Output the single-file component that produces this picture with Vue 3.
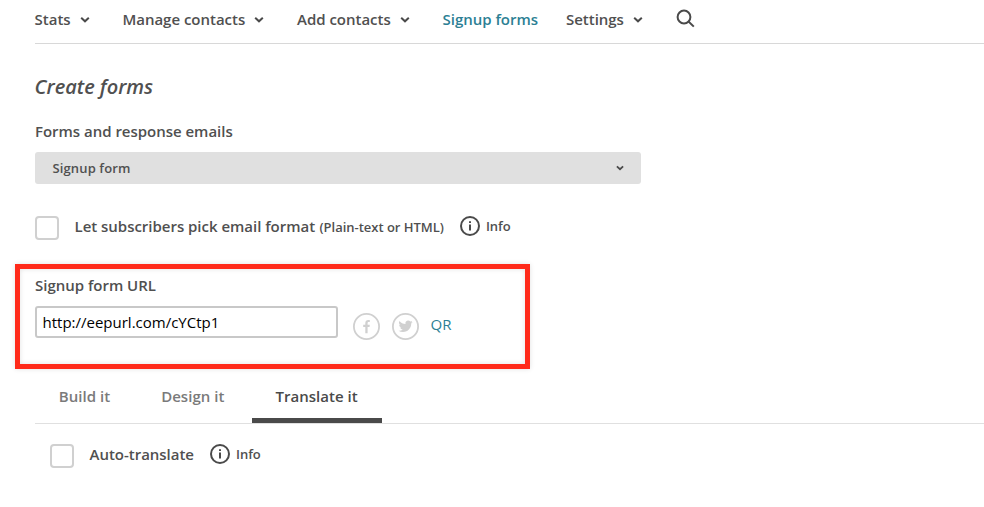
<template>
  <div class="page">
    <nav class="main-nav">
      <a
        v-for="item in navItems"
        :key="item.label"
        href="#"
        class="nav-item"
        :class="{ active: item.active }"
        @click.prevent
      >
        <span>{{ item.label }}</span>
        <svg v-if="item.menu" class="nav-chevron" viewBox="0 0 10 8">
          <path d="M1.2 1.8 L5 5.3 L8.8 1.8" />
        </svg>
      </a>
      <button class="search-btn" aria-label="Search">
        <svg viewBox="0 0 20 20">
          <circle cx="8" cy="8" r="6.4" />
          <path d="M12.5 12.5 L17.8 17.6" />
        </svg>
      </button>
    </nav>

    <h1 class="title">Create forms</h1>

    <div class="field-label">Forms and response emails</div>
    <div class="form-select">
      <span>Signup form</span>
      <svg class="select-chevron" viewBox="0 0 8 6">
        <path d="M0.9 1.4 L4 4.2 L7.1 1.4" />
      </svg>
    </div>

    <div class="check-row format-row">
      <input v-model="pickFormat" type="checkbox" class="checkbox" />
      <span class="check-label">Let subscribers pick email format</span>
      <span class="hint">(Plain-text or HTML)</span>
      <svg class="info-icon" viewBox="0 0 20 20">
        <circle cx="10" cy="10" r="9" />
        <path d="M10 8.6 V14.6 M10 5.2 V7" />
      </svg>
      <span class="info-text">Info</span>
    </div>

    <section class="url-box">
      <div class="url-label">Signup form URL</div>
      <div class="url-row">
        <input v-model="url" type="text" class="url-input" />
        <a href="#" class="social" aria-label="Facebook" @click.prevent>
          <svg viewBox="0 0 27 27">
            <circle cx="13.5" cy="13.5" r="12.6" />
            <path d="M12.3 20.2 V14.1 H10.2 V11.8 H12.3 V10.2 C12.3 7.9 13.5 7 15.2 7 H16.8 V9.1 H15.7 C14.9 9.1 14.6 9.5 14.6 10.2 V11.8 H16.8 L16.5 14.1 H14.6 V20.2 Z" />
          </svg>
        </a>
        <a href="#" class="social" aria-label="Twitter" @click.prevent>
          <svg viewBox="0 0 27 27">
            <circle cx="13.5" cy="13.5" r="12.6" />
            <path transform="translate(6.5 6.2) scale(.59)" d="M23.95 4.57a10 10 0 0 1-2.82.77 4.96 4.96 0 0 0 2.16-2.72c-.95.55-2 .95-3.13 1.18a4.92 4.92 0 0 0-8.38 4.48C7.69 8.1 4.07 6.13 1.64 3.16a4.92 4.92 0 0 0 1.52 6.57 4.9 4.9 0 0 1-2.23-.61v.06a4.92 4.92 0 0 0 3.95 4.83 5 5 0 0 1-2.21.08 4.94 4.94 0 0 0 4.6 3.42A9.87 9.87 0 0 1 0 19.54a14 14 0 0 0 7.55 2.21c9.05 0 14-7.5 14-13.98 0-.21 0-.42-.02-.63a9.94 9.94 0 0 0 2.42-2.57z" />
          </svg>
        </a>
        <a href="#" class="qr-link" @click.prevent>QR</a>
      </div>
    </section>

    <div class="tabs">
      <button
        v-for="tab in tabs"
        :key="tab"
        class="tab"
        :class="{ selected: tab === currentTab }"
        @click="currentTab = tab"
      >
        {{ tab }}
      </button>
    </div>

    <div class="check-row translate-row">
      <input v-model="autoTranslate" type="checkbox" class="checkbox" />
      <span class="check-label">Auto-translate</span>
      <svg class="info-icon" viewBox="0 0 20 20">
        <circle cx="10" cy="10" r="9" />
        <path d="M10 8.6 V14.6 M10 5.2 V7" />
      </svg>
      <span class="info-text">Info</span>
    </div>
  </div>
</template>

<script setup>
import { ref } from 'vue';

const navItems = [
  { label: 'Stats', menu: true },
  { label: 'Manage contacts', menu: true },
  { label: 'Add contacts', menu: true },
  { label: 'Signup forms', active: true },
  { label: 'Settings', menu: true }
];

const tabs = ['Build it', 'Design it', 'Translate it'];
const currentTab = ref('Translate it');

const url = ref('http://eepurl.com/cYCtp1');
const pickFormat = ref(false);
const autoTranslate = ref(false);
</script>

<style>
body {
  background-color: #fff;
  overflow: hidden;
}
</style>

<style scoped>
.page {
  height: 507px;
  padding-left: 35px;
  box-sizing: border-box;
  overflow: hidden;
  font-family: "Open Sans", sans-serif;
  font-size: 15px;
  font-weight: 600;
  line-height: 20px;
  letter-spacing: -0.02px;
  color: #505050;
}

svg {
  display: block;
  flex: none;
  fill: none;
  stroke: #4a4a4a;
}

.main-nav {
  display: flex;
  height: 43px;
  margin-left: -0.4px;
  border-bottom: 1px solid #d8d8d8;
}

.nav-item {
  display: flex;
  align-items: center;
  gap: 9px;
  height: 20px;
  margin-top: 9px;
  margin-right: 32.8px;
  color: inherit;
  text-decoration: none;
  white-space: nowrap;
}

.nav-item.active {
  color: #2c7f94;
  margin-right: 28px;
}

.nav-chevron {
  width: 10px;
  height: 8px;
  margin-top: 2px;
  stroke-width: 2;
}

.search-btn {
  height: 20px;
  margin-top: 9px;
  padding: 0;
  border: none;
  background: none;
}

.search-btn svg {
  width: 20px;
  height: 20px;
  margin-left: 0.6px;
  stroke-width: 2;
}

.title {
  margin: 28px 0 0 -0.5px;
  font-size: 20px;
  font-style: italic;
  font-weight: 600;
  line-height: 30px;
}

.field-label {
  margin-top: 19px;
}

.form-select {
  display: flex;
  align-items: center;
  justify-content: space-between;
  width: 606px;
  height: 32px;
  margin-top: 11px;
  padding: 0 17px 0 17.5px;
  box-sizing: border-box;
  border-radius: 3px;
  background-color: #e0e0e0;
  font-size: 13px;
  letter-spacing: 0.13px;
}

.select-chevron {
  width: 8px;
  height: 6px;
  stroke-width: 1.8;
}

.check-row {
  display: flex;
  align-items: center;
  height: 24px;
}

.format-row {
  margin-top: 32px;
}

.checkbox {
  appearance: none;
  flex: none;
  width: 24px;
  height: 24px;
  margin: 0 15.5px 0 0;
  border: 2px solid #d0d0d0;
  border-radius: 4px;
  background-color: #fff;
}

.check-label {
  margin-top: -4px;
}

.hint {
  margin-left: 4.4px;
  margin-top: -2px;
  font-size: 13px;
}

.info-icon {
  width: 20px;
  height: 20px;
  margin: -4px 6px 0 16px;
  stroke-width: 2;
}

.info-text {
  margin-top: -4px;
  font-size: 13px;
}

.url-box {
  width: 515px;
  height: 105px;
  margin: 24px 0 0 -20.5px;
  padding: 6px 15.5px 0;
  box-sizing: border-box;
  border: 5px solid #ff2a1a;
  box-shadow: 0 0 5px rgba(0, 0, 0, 0.12), inset 0 0 5px rgba(0, 0, 0, 0.12);
}

.url-row {
  display: flex;
  margin-top: 11px;
}

.url-input {
  width: 303px;
  height: 32px;
  margin: 0 15px 0 0;
  padding: 0 5.5px;
  box-sizing: border-box;
  border: 2px solid #c8c8c8;
  border-radius: 3px;
  outline: none;
  font-family: inherit;
  font-size: 15px;
  font-weight: 400;
  color: #000;
}

.social {
  height: 27px;
  margin: 7px 12px 0 0;
}

.social svg {
  width: 27px;
  height: 27px;
}

.social circle {
  stroke: #d0d0d0;
  stroke-width: 1.8;
}

.social path {
  fill: #d0d0d0;
  stroke: none;
}

.qr-link {
  margin-top: 8px;
  margin-left: -0.5px;
  font-weight: 400;
  color: #2c7f94;
  text-decoration: none;
}

.tabs {
  display: flex;
  gap: 3px;
  height: 54px;
  border-bottom: 1px solid #e0e0e0;
}

.tab {
  height: 54px;
  padding: 5px 24.2px 0 23.8px;
  border: none;
  border-bottom: 5px solid transparent;
  background: none;
  font: inherit;
  letter-spacing: 0.03px;
  color: #7a7a7a;
}

.tab.selected {
  border-bottom-color: #4a4a4a;
  color: #4a4a4a;
}

.translate-row {
  margin-top: 20px;
  padding-left: 15px;
}
</style>
